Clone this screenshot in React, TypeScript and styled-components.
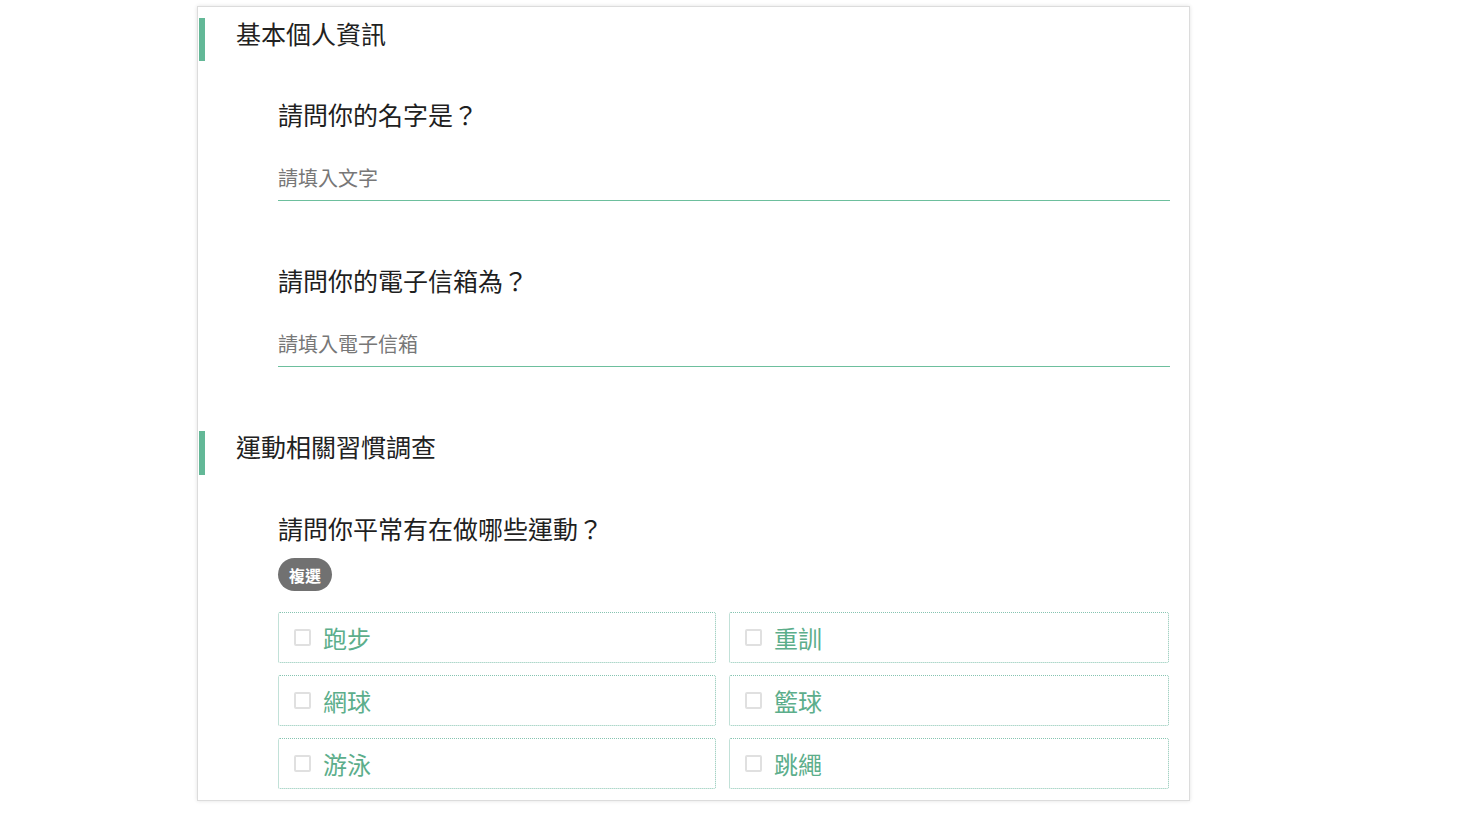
import styled, { createGlobalStyle } from 'styled-components';

const GlobalStyle = createGlobalStyle`
  html, body {
    margin: 0;
    padding: 0;
    background: #ffffff;
  }
  body {
    font-family: "Noto Sans CJK TC", "Noto Sans", sans-serif;
    color: #222;
  }
`

const Page = styled.div`
  width: 1474px;
  height: 814px;
  overflow: hidden;
  padding: 6px 0 0 197px;
  box-sizing: border-box;
`

const Card = styled.div`
  width: 993px;
  height: 795px;
  box-sizing: border-box;
  border: 1px solid #dcdcdc;
  box-shadow: 0 0 4px rgba(0, 0, 0, 0.12);
  background: #fff;
  padding: 11px 19px 0 1px;
  overflow: hidden;
`

const SectionHeader = styled.h2<{ $first?: boolean }>`
  margin: ${p => (p.$first ? '0' : '64px')} 0 0 0;
  border-left: 6px solid #63b897;
  padding: 0 0 ${p => (p.$first ? '12px' : '13px')} 31px;
  font-size: 25px;
  line-height: 31px;
  font-weight: 400;
  color: #222;
`

const Question = styled.div`
  padding-left: 79px;
  margin-top: 39px;
`

const QuestionTitle = styled.div`
  font-size: 25px;
  line-height: 28px;
  padding-bottom: 4px;
  color: #1f1f1f;
`

const TextInput = styled.input`
  display: block;
  width: 100%;
  box-sizing: border-box;
  margin-top: 28px;
  height: 41px;
  padding: 0 0 5px 0;
  border: none;
  border-bottom: 1px solid #6dbf9d;
  outline: none;
  font-family: inherit;
  font-size: 20px;
  color: #333;
  background: transparent;
  &::placeholder {
    color: #777;
  }
`

const NextQuestion = styled(Question)`
  margin-top: 65px;
`

const Badge = styled.span`
  display: inline-flex;
  align-items: center;
  margin-top: 12px;
  height: 33px;
  padding: 0 11px;
  border-radius: 17px;
  background: #717171;
  color: #fff;
  font-size: 16px;
  font-weight: 700;
`

const OptionGrid = styled.div`
  display: grid;
  grid-template-columns: 438px 440px;
  column-gap: 13px;
  row-gap: 12px;
  margin-top: 21px;
`

const Option = styled.label`
  display: flex;
  align-items: center;
  height: 51px;
  box-sizing: border-box;
  border: 1px dotted #86c4b1;
  border-radius: 2px;
  padding-left: 15px;
  cursor: pointer;
`

const Box = styled.span`
  width: 17px;
  height: 17px;
  box-sizing: border-box;
  border: 2px solid #e0e0e0;
  border-radius: 2px;
  margin-right: 12px;
`

const OptionText = styled.span`
  font-size: 24px;
  line-height: 30px;
  color: #5cae8b;
`

const sports = ['跑步', '重訓', '網球', '籃球', '游泳', '跳繩'];

export default function App() {
  return (
    <Page>
      <GlobalStyle />
      <Card>
        <SectionHeader $first>基本個人資訊</SectionHeader>
        <Question>
          <QuestionTitle>請問你的名字是？</QuestionTitle>
          <TextInput placeholder="請填入文字" />
        </Question>
        <NextQuestion>
          <QuestionTitle>請問你的電子信箱為？</QuestionTitle>
          <TextInput placeholder="請填入電子信箱" />
        </NextQuestion>

        <SectionHeader>運動相關習慣調查</SectionHeader>
        <Question>
          <QuestionTitle>請問你平常有在做哪些運動？</QuestionTitle>
          <Badge>複選</Badge>
          <OptionGrid>
            {sports.map(s => (
              <Option key={s}>
                <Box />
                <OptionText>{s}</OptionText>
              </Option>
            ))}
          </OptionGrid>
        </Question>
      </Card>
    </Page>
  )
}
